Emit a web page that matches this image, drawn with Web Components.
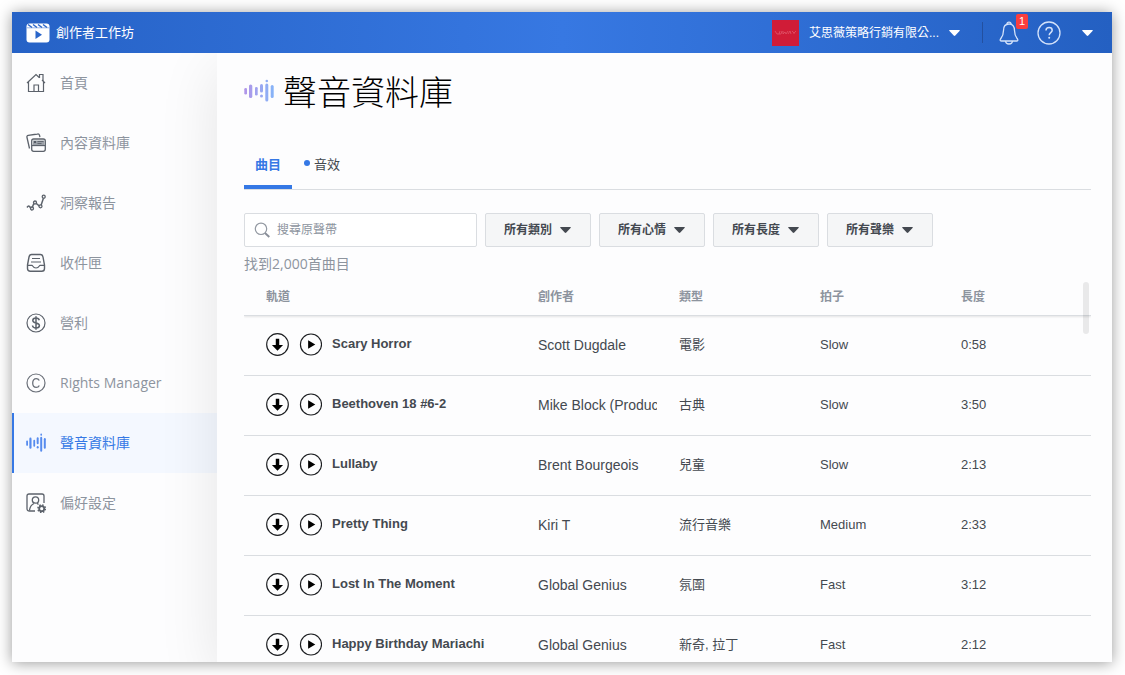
<!DOCTYPE html>
<html lang="zh-Hant">
<head>
<meta charset="utf-8">
<meta name="viewport" content="width=device-width, initial-scale=1">
<title>聲音資料庫 - 創作者工作坊</title>
<style>
  body { margin: 0; background: #fff; font-family: "Liberation Sans", "Noto Sans CJK TC", sans-serif; color: #444950; }
</style>
</head>
<body>
<studio-app>
  <studio-header slot="header"></studio-header>
  <side-nav slot="nav">
    <nav-item icon="home">首頁</nav-item>
    <nav-item icon="content">內容資料庫</nav-item>
    <nav-item icon="insights">洞察報告</nav-item>
    <nav-item icon="inbox">收件匣</nav-item>
    <nav-item icon="money">營利</nav-item>
    <nav-item icon="rights">Rights Manager</nav-item>
    <nav-item icon="sound" active>聲音資料庫</nav-item>
    <nav-item icon="settings">偏好設定</nav-item>
  </side-nav>
  <page-title>聲音資料庫</page-title>
  <tab-bar></tab-bar>
  <filter-bar>
    <filter-select>所有類別</filter-select>
    <filter-select>所有心情</filter-select>
    <filter-select>所有長度</filter-select>
    <filter-select>所有聲樂</filter-select>
  </filter-bar>
  <result-count>找到2,000首曲目</result-count>
  <track-table></track-table>
</studio-app>

<script>
const wave = `<rect x=".3" y="9" width="2.7" height="6.500" rx="1.300"/><rect x="5" y="5.500" width="3.300" height="13.500" rx="1.600"/><rect x="11" y="8" width="2.700" height="8.500" rx="1.300"/><rect x="16" y="5" width="3" height="8.500" rx="1.500"/><circle cx="17.500" cy="17" r="1.500"/><circle cx="22.800" cy="2" r="1.300"/><rect x="21.300" y="4.500" width="3" height="18" rx="1.500"/><rect x="26.700" y="6" width="3" height="13" rx="1.500"/>`;
const icons = {
  logo: { box: "0 0 24 20", w: 24, h: 20, body: `<rect x=".5" y=".5" width="23" height="19" rx="3" fill="#fff"/><g stroke="#2a66ca" stroke-width="1.500"><path d="M2 1.500l4 3M7 1.500l4 3M12 1.500l4 3M17 1.500l4 3"/><path d="M1 4.800h22" stroke-width=".8" opacity=".6"/></g><path d="M9.500 7.500v8.500l6.500-4.200z" fill="#2a66ca"/>` },
  home: { box: "0 0 20 20", w: 20, h: 20, body: `<g fill="none" stroke="#5c626b" stroke-width="1.200"><path d="M1 10L10 1.500l3.500 3.200M16 7l3 3M2.500 9v9.500h15V8.500"/><path d="M8 18.500V12h4.500v6.500"/><path d="M13.500 5V1.500h3.500V8"/></g>` },
  content: { box: "0 0 20 20", w: 20, h: 20, body: `<g fill="none" stroke="#5c626b" stroke-width="1.300"><path d="M3.500 15.500L1 4.500c-.3-1.200.2-2 1.300-2.200L11.500 1c1-.2 1.700.2 2 1.200l.4 2"/><rect x="5.700" y="6" width="13.600" height="12.300" rx="2"/><path d="M6 12.500h13"/></g><path d="M7 7.500h11.500V12H7z" fill="#9ba0a7"/><path d="M8 8h2v2H8z" fill="#555b64"/><path d="M11.500 8.500h6M11.500 10.500h4" stroke="#555b64" stroke-width=".8"/>` },
  insights: { box: "0 0 20 20", w: 20, h: 20, body: `<path d="M1 14.500c2-3 3-.5 4.500 1.500L8.500 9l6 5L17.500 5" fill="none" stroke="#5c626b" stroke-width="1.500"/><g fill="#f4f4f5" stroke="#5c626b" stroke-width="1.300"><circle cx="6" cy="15.500" r="1.500"/><circle cx="9" cy="9.500" r="1.500"/><circle cx="14.500" cy="13.300" r="1.500"/><circle cx="17.700" cy="3.700" r="1.500"/></g>` },
  inbox: { box: "0 0 20 20", w: 20, h: 20, body: `<g fill="none" stroke="#5c626b" stroke-width="1.400"><path d="M1.500 12L3 4c.3-1.700 1-2.500 2.500-2.500h9c1.500 0 2.200.8 2.500 2.500l1.500 8v3.500c0 1.800-1 2.800-2.800 2.800H4.300c-1.800 0-2.800-1-2.800-2.800z"/><path d="M1.500 12.300H6c.8 0 .8 2.700 4 2.700s3.200-2.700 4-2.700h4.500M6 5.500h8M5 9h10" stroke-width="1.200"/></g>` },
  money: { box: "0 0 20 20", w: 20, h: 20, body: `<g fill="none" stroke="#5c626b"><circle cx="10" cy="10" r="9" stroke-width="1.200"/><path d="M13.300 7.200c-.4-1.500-1.600-2.100-3.300-2.100-1.900 0-3.200.9-3.200 2.400 0 3.400 6.600 1.500 6.600 5 0 1.600-1.300 2.500-3.400 2.500-2 0-3.300-.8-3.500-2.500M10 3.300v13.400" stroke-width="1.500"/></g>` },
  rights: { box: "0 0 20 20", w: 20, h: 20, body: `<g fill="none" stroke="#6b7079"><circle cx="10" cy="10" r="9" stroke-width="1.200"/><path d="M13.300 7.500c-.6-1.200-1.600-1.900-3-1.900-2.300 0-3.600 1.800-3.600 4.400s1.300 4.400 3.600 4.400c1.400 0 2.400-.6 3-1.900" stroke-width="1.300"/></g>` },
  settings: { box: "0 0 20 20", w: 20, h: 20, body: `<g fill="none" stroke="#5c626b" stroke-width="1.300"><path d="M9 18H3.500C2 18 1 17.200 1 15.800V3c0-1.200.8-2 2-2h13c1.200 0 2 .8 2 2v7"/><circle cx="9.500" cy="7" r="3.200"/><path d="M3.500 17.500c.3-3.500 2-5.800 4.500-7M11 10.200l1.500 1.300"/></g><circle cx="15.700" cy="15.700" r="2.500" fill="none" stroke="#5c626b" stroke-width="1.800"/><circle cx="15.700" cy="15.700" r="3.700" fill="none" stroke="#5c626b" stroke-width="1.600" stroke-dasharray="1.500 1.406"/>` },
  sound: { box: "0 0 30 24", w: 20, h: 20, body: `<g fill="#568bee">${wave}</g>` },
  title: { box: "0 0 30 24", w: 30, h: 24, body: `<defs><linearGradient id="g" gradientUnits="userSpaceOnUse" x1="0" y1="0" x2="30" y2="0"><stop stop-color="#b295e8"/><stop offset="1" stop-color="#86b4f8"/></linearGradient></defs><g fill="url(#g)">${wave}</g>` },
  bell: { box: "0 0 20 24", w: 20, h: 24, body: `<g fill="none" stroke="#d4e2fa" stroke-width="1.300"><path d="M10 3c-4 0-5.500 3-5.500 6.500C4.500 14.500 3 16 1.500 18c-.7 1.200-.2 2 1 2h15c1.200 0 1.700-.8 1-2-1.500-2-3-3.500-3-8.500C15.500 6 14 3 10 3z"/><path d="M8 3c0-2.600 4-2.600 4 0M6.500 20c.3 4 6.700 4 7 0"/></g>` },
  help: { box: "0 0 24 24", w: 24, h: 24, body: `<g fill="none" stroke="#d4e2fa"><circle cx="12" cy="12" r="11" stroke-width="1.300"/><path d="M9 9.500c0-4 6.200-3.700 6.200-.3 0 2.300-3 2.500-3 5" stroke-width="1.500"/></g><circle cx="12.200" cy="16.700" r="1" fill="#d4e2fa"/>` },
  caret: { box: "0 0 11 6", w: 11, h: 6, body: `<path d="M1 0h9c.8 0 1 .5.500 1L6.300 5.500c-.5.500-1.100.5-1.600 0L.5 1C0 .5.200 0 1 0z" fill="currentColor"/>` },
  search: { box: "0 0 16 16", w: 16, h: 16, body: `<circle cx="7" cy="6.800" r="5.700" fill="none" stroke="#9298a1" stroke-width="1.200"/><path d="M11 11l4.300 4" stroke="#8a8f99" stroke-width="1.900"/>` },
  download: { box: "0 0 24 24", w: 23, h: 23, body: `<circle cx="12" cy="12" r="11.300" fill="none" stroke="#1c1e21" stroke-width="1.200"/><path d="M10.200 6h3.600v6.500h4L12 18.500l-5.800-6h4z"/>` },
  play: { box: "0 0 24 24", w: 23, h: 23, body: `<circle cx="12.500" cy="12" r="11" fill="none" stroke="#1c1e21" stroke-width="1.200"/><path d="M9.500 7.500v9l7.500-4.500z"/>` },
  brand: { box: "0 0 27 26", w: 27, h: 26, body: `<rect width="27" height="26" fill="#d01c37"/><path d="M3 11l2 3h2M8 11l-1 3h2l1-3M11 11v3l2-2 1 2 2-3M16 14l2-3 1 3M20 11l2 2 2-2M22 13v1" fill="none" stroke="#e0566a" stroke-width=".8"/>` }
};

class BaseElement extends HTMLElement {
  connectedCallback() {
    if (this.shadowRoot) return;
    this.attachShadow({ mode: "open" }).innerHTML = this.render();
  }
}
const define = (name, render) =>
  customElements.define(name, class extends BaseElement { render() { return render(this); } });

define("ui-icon", el => {
  const i = icons[el.getAttribute("name")];
  return `<style>:host{display:block;flex:none}svg{display:block}</style>
    <svg width="${i.w}" height="${i.h}" viewBox="${i.box}" preserveAspectRatio="none" aria-hidden="true">${i.body}</svg>`;
});

define("studio-app", () => `
  <style>
    :host { display: block; box-sizing: border-box; height: 100vh; padding: 12px 13px 13px 12px; }
    .window { display: flex; flex-direction: column; height: 100%; overflow: hidden; background: #fdfdfe; }
    .frame { height: 100%; box-shadow: 0 1px 14px rgba(0,0,0,.4); }
    .body { display: flex; flex: 1; min-height: 0; }
    slot[name=header] { display: block; }
    main { position: relative; flex: 1; min-width: 0; display: flex; flex-direction: column; padding: 0 21px 0 27px;
      background: #fdfdfe; box-shadow: 0 16px 56px rgba(0,0,0,.1); }
  </style>
  <div class="frame"><div class="window">
    <slot name="header"></slot>
    <div class="body"><slot name="nav"></slot><main><slot></slot></main></div>
  </div></div>`);

define("studio-header", () => `
  <style>
    :host { display: flex; align-items: center; box-sizing: border-box; height: 41px; padding: 0 19px 0 14px; position: relative; z-index: 1;
      color: #fff; background: linear-gradient(90deg, #2662c6, #3778e2 50%, #2460c2); }
    button { display: flex; align-items: center; padding: 0; border: 0; background: none; color: inherit; font: inherit; }
    a { display: flex; align-items: center; gap: 6px; color: inherit; text-decoration: none; font-size: 13px; line-height: 20px; }
    .account { gap: 10px; margin-left: auto; font-size: 12px; line-height: 20px; }
    .rule { width: 1px; height: 21px; margin: 0 16px 0 22px; background: #2350a0; }
    .bell { position: relative; }
    .badge { position: absolute; left: 17px; top: -7px; width: 12px; height: 15px; border-radius: 2px; background: #fa3e3e; font-size: 11px; line-height: 15px; text-align: center; }
    .help { margin: 0 21px 0 18px; }
  </style>
  <a href="#"><ui-icon name="logo"></ui-icon>創作者工作坊</a>
  <button class="account"><ui-icon name="brand"></ui-icon><span>艾思薇策略行銷有限公...</span><ui-icon name="caret"></ui-icon></button>
  <span class="rule"></span>
  <button class="bell" aria-label="通知"><ui-icon name="bell"></ui-icon><span class="badge">1</span></button>
  <button class="help" aria-label="說明"><ui-icon name="help"></ui-icon></button>
  <button aria-label="更多"><ui-icon name="caret"></ui-icon></button>`);

define("side-nav", () => `
  <style>:host { display: block; flex: none; width: 205px; } nav { display: flex; flex-direction: column; }</style>
  <nav><slot></slot></nav>`);

define("nav-item", el => `
  <style>
    :host { display: block; --ink: #8d949e; }
    a { display: flex; align-items: center; gap: 14px; box-sizing: border-box; height: 60px; padding-left: 12px; border-left: 2px solid transparent;
      color: var(--ink); text-decoration: none; font: 400 14px/20px "Open Sans", "Noto Sans CJK TC", sans-serif; }
    :host([active]) { --ink: #3578e5; }
    :host([active]) a { border-color: #3578e5; background: #f4f8ff; }
  </style>
  <a href="#"><ui-icon name="${el.getAttribute("icon")}"></ui-icon><slot></slot></a>`);

define("page-title", () => `
  <style>
    :host { display: block; padding-top: 13px; }
    h1 { display: flex; align-items: center; gap: 9px; margin: 0; color: #000; font: 300 34px/50px "Noto Sans CJK TC", sans-serif; }
  </style>
  <h1><ui-icon name="title"></ui-icon><span><slot></slot></span></h1>`);

define("tab-bar", () => `
  <style>
    :host { display: block; margin-top: 25px; border-bottom: 1px solid #dadde1; }
    div { display: flex; gap: 12px; }
    button { display: flex; align-items: center; box-sizing: border-box; height: 48px; padding: 0; border: 0; background: none; color: #444950;
      font: 13px/20px "Liberation Sans", "Noto Sans CJK TC", sans-serif; }
    .on { padding: 4px 11px 0; border-bottom: 4px solid #3578e5; color: #3578e5; font-weight: 700; }
    .dot { width: 6px; height: 6px; margin: 0 4px 4px 0; border-radius: 50%; background: #3578e5; }
  </style>
  <div role="tablist">
    <button class="on" role="tab" aria-selected="true">曲目</button>
    <button role="tab" aria-selected="false"><span class="dot"></span>音效</button>
  </div>`);

define("filter-bar", () => `
  <style>
    :host { display: flex; flex-wrap: wrap; gap: 8px; margin-top: 23px; }
    label { display: flex; align-items: center; gap: 7px; box-sizing: border-box; width: 233px; height: 34px; padding: 0 9px; border: 1px solid #dadde1; border-radius: 2px; background: #fff; }
    input { flex: 1; min-width: 0; padding: 0; border: 0; outline: 0; background: none; font: 12px/20px "Liberation Sans", "Noto Sans CJK TC", sans-serif; }
    input::placeholder { color: #8d949e; opacity: 1; }
  </style>
  <label><ui-icon name="search"></ui-icon><input type="search" placeholder="搜尋原聲帶" aria-label="搜尋原聲帶"></label>
  <slot></slot>`);

define("filter-select", el => `
  <style>
    :host { display: grid; align-items: center; color: #444950; }
    select { grid-area: 1 / 1; appearance: none; box-sizing: border-box; width: 106px; height: 34px; margin: 0; padding: 0 0 0 18px; border: 1px solid #dadde1; border-radius: 2px;
      background: #f5f6f7; color: inherit; font: 700 12px/20px "Liberation Sans", "Noto Sans CJK TC", sans-serif; }
    ui-icon { grid-area: 1 / 1; justify-self: end; margin-right: 20px; pointer-events: none; }
  </style>
  <select aria-label="${el.textContent}"><option>${el.textContent}</option></select><ui-icon name="caret"></ui-icon>`);

define("result-count", () => `
  <style>:host { display: block; margin-top: 7px; color: #8d949e; font: 400 14px/20px "Open Sans", "Noto Sans CJK TC", sans-serif; }</style>
  <slot></slot>`);

const tracks = [
  ["Scary Horror", "Scott Dugdale", "電影", "Slow", "0:58"],
  ["Beethoven 18 #6-2", "Mike Block (Producer)", "古典", "Slow", "3:50"],
  ["Lullaby", "Brent Bourgeois", "兒童", "Slow", "2:13"],
  ["Pretty Thing", "Kiri T", "流行音樂", "Medium", "2:33"],
  ["Lost In The Moment", "Global Genius", "氛圍", "Fast", "3:12"],
  ["Happy Birthday Mariachi", "Global Genius", "新奇, 拉丁", "Fast", "2:12"]
];
define("track-table", () => `
  <style>
    :host { display: block; position: relative; flex: 1; min-height: 0; overflow: hidden; }
    table { width: 100%; table-layout: fixed; border-collapse: separate; border-spacing: 0; color: #444950; font-size: 13px; line-height: 20px; }
    th, td { box-sizing: border-box; padding: 0 0 0 22px; text-align: left; white-space: nowrap; overflow: hidden; border-bottom: 1px solid #dadde1; }
    th { height: 42px; padding-top: 4px; color: #8d949e; font-size: 12px; }
    thead { box-shadow: 0 1px 2px rgba(0,0,0,.1); }
    td { height: 60px; padding-bottom: 2px; }
    td.artist { font-size: 14px; }
    .m { width: 141px; } .l { width: 152px; }
    .track { display: flex; align-items: center; gap: 10px; font-weight: 700; }
    .name { margin-bottom: 2px; }
    button { padding: 0; border: 0; background: none; color: #000; }
    .thumb { position: absolute; right: 2px; top: 8px; width: 6px; height: 52px; border-radius: 3px; background: rgba(0,0,0,.08); }
  </style>
  <table>
    <thead><tr><th>軌道</th><th class="m">創作者</th><th class="m">類型</th><th class="m">拍子</th><th class="l">長度</th></tr></thead>
    <tbody>${tracks.map(([n, a, g, t, d]) => `<tr>
      <td><div class="track"><button aria-label="下載"><ui-icon name="download"></ui-icon></button><button aria-label="播放"><ui-icon name="play"></ui-icon></button><span class="name">${n}</span></div></td>
      <td class="artist">${a}</td><td>${g}</td><td>${t}</td><td>${d}</td></tr>`).join("")}</tbody>
  </table>
  <span class="thumb"></span>`);
</script>
</body>
</html>
